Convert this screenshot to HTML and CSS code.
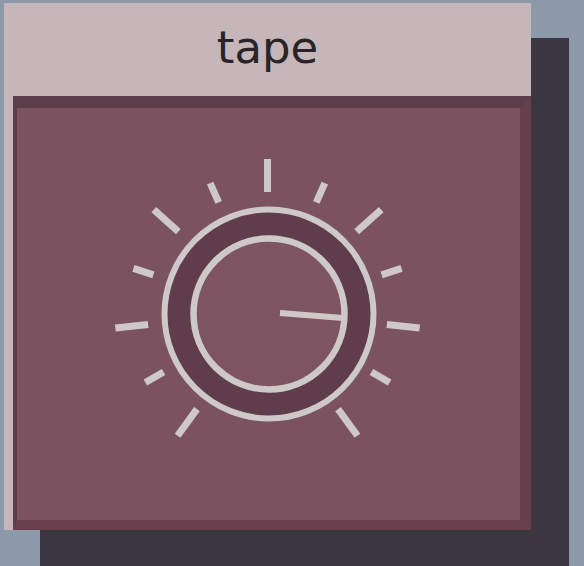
FILE: index.html
```html
<!DOCTYPE html>
<html>
<head>
<meta charset="utf-8">
<link rel="stylesheet" href="styles.css">
</head>
<body>
<div class="window">
  <div class="title">tape</div>
  <div class="body">
    <div class="panel">
      <svg class="knob" width="321" height="320" viewBox="0 0 321 320">
        <g class="ticks" transform="translate(159.5 158)">
          <line x1="0" y1="-120" x2="0" y2="-153" transform="rotate(0)"/>
          <line x1="0" y1="-120" x2="0" y2="-141" transform="rotate(24)"/>
          <line x1="0" y1="-120" x2="0" y2="-153" transform="rotate(48)"/>
          <line x1="0" y1="-120" x2="0" y2="-141" transform="rotate(72)"/>
          <line x1="0" y1="-120" x2="0" y2="-153" transform="rotate(96)"/>
          <line x1="0" y1="-120" x2="0" y2="-141" transform="rotate(120)"/>
          <line x1="0" y1="-120" x2="0" y2="-153" transform="rotate(144)"/>
          <line x1="0" y1="-120" x2="0" y2="-141" transform="rotate(-24)"/>
          <line x1="0" y1="-120" x2="0" y2="-153" transform="rotate(-48)"/>
          <line x1="0" y1="-120" x2="0" y2="-141" transform="rotate(-72)"/>
          <line x1="0" y1="-120" x2="0" y2="-153" transform="rotate(-96)"/>
          <line x1="0" y1="-120" x2="0" y2="-141" transform="rotate(-120)"/>
          <line x1="0" y1="-120" x2="0" y2="-153" transform="rotate(-144)"/>
        </g>
        <g transform="translate(161 160)">
          <circle class="ring" cx="0" cy="0" r="104.5"/>
          <circle class="cap" cx="0" cy="0" r="75.5"/>
          <line class="pointer" x1="11" y1="-1" x2="74" y2="4"/>
        </g>
      </svg>
    </div>
  </div>
</div>
</body>
</html>
```
FILE: styles.css
```css
html, body {
  margin: 0;
  padding: 0;
}
body {
  background: #8b99a9;
  width: 584px;
  height: 566px;
  overflow: hidden;
  padding: 3px 0 0 4px;
  box-sizing: border-box;
}
.window {
  width: 527px;
  height: 527px;
  background: #c5b6ba;
  display: flex;
  flex-direction: column;
  box-shadow: 37px 36px 0 1px #3b3741;
}
.title {
  height: 93px;
  box-sizing: border-box;
  padding-bottom: 4px;
  display: flex;
  align-items: center;
  justify-content: center;
  font-family: "DejaVu Sans", sans-serif;
  font-size: 45px;
  color: #2a2428;
}
.body {
  flex: 1;
  display: flex;
  padding-left: 9px;
}
.panel {
  flex: 1;
  box-sizing: border-box;
  background: #7b5360;
  border-style: solid;
  border-width: 12px 11px 10px 4px;
  border-color: #5e3d4a #653f4c #673f4d #5e3d4a;
  display: flex;
  align-items: center;
  justify-content: center;
}
.knob {
  display: block;
}
.ticks line {
  stroke: #cfc8c8;
  stroke-width: 7;
  stroke-linecap: butt;
}
.ring {
  fill: #5f3d4a;
  stroke: #cfc8c8;
  stroke-width: 6;
}
.cap {
  fill: #7d5562;
  stroke: #cfc8c8;
  stroke-width: 6.5;
}
.pointer {
  stroke: #cfc8c8;
  stroke-width: 6;
  stroke-linecap: butt;
}
```
